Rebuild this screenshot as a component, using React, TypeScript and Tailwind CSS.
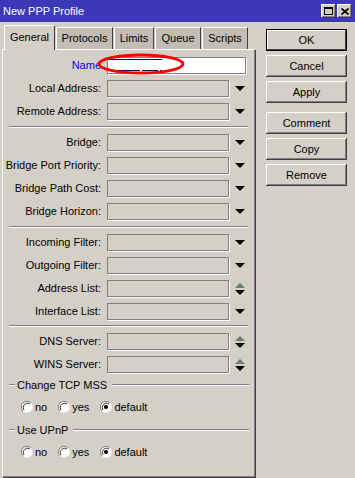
import React from "react";

const raised =
  "shadow-[inset_-1px_-1px_#404040,inset_1px_1px_#ffffff,inset_-2px_-2px_#808080]";

function DownArrow() {
  return (
    <svg width="10" height="6" viewBox="0 0 10 6">
      <polygon points="0,0 10,0 5,5" fill="#000" />
    </svg>
  );
}

function UpDownArrow() {
  return (
    <svg width="10" height="12" viewBox="0 0 10 12">
      <polygon points="5,0 10,5 0,5" fill="#6f7d6f" />
      <polygon points="0,7 10,7 5,12" fill="#000" />
    </svg>
  );
}

function Field({ label, mt, updown }: { label: string; mt: string; updown?: boolean }) {
  return (
    <div className={`flex items-center h-[17px] ${mt}`}>
      <div className="w-[99px] pr-[1px] text-right whitespace-nowrap">{label}</div>
      <div className="ml-[5px] w-[122px] h-[17px] border border-[#808080] shadow-[1px_1px_0_#ffffff]" />
      <div className="w-[22px] flex justify-center">{updown ? <UpDownArrow /> : <DownArrow />}</div>
    </div>
  );
}

function Separator({ mt }: { mt: string }) {
  return <div className={`ml-[6px] mr-[6px] h-[2px] border-t border-[#808080] border-b border-b-white ${mt}`} />;
}

function GroupHeader({ title, mt }: { title: string; mt: string }) {
  return (
    <div className={`flex items-center h-[14px] ${mt}`}>
      <div className="ml-[6px] w-[6px] h-[2px] border-t border-[#808080] border-b border-b-white" />
      <div className="ml-[2px] whitespace-nowrap">{title}</div>
      <div className="ml-[5px] mr-[5px] flex-1 h-[2px] border-t border-[#808080] border-b border-b-white" />
    </div>
  );
}

function Radio({ checked }: { checked?: boolean }) {
  return (
    <svg width="12" height="12" viewBox="0 0 12 12">
      <circle cx="6" cy="6" r="5.5" fill="#ffffff" />
      <path d="M10 2 A5.5 5.5 0 0 0 2 10" stroke="#808080" strokeWidth="1" fill="none" />
      <path d="M9 3 A4.3 4.3 0 0 0 3 9" stroke="#404040" strokeWidth="1" fill="none" />
      <path d="M2 10 A5.5 5.5 0 0 0 10 2" stroke="#e8e6e0" strokeWidth="1" fill="none" />
      {checked && <circle cx="6" cy="6" r="2" fill="#000" />}
    </svg>
  );
}

function RadioRow({ mt }: { mt: string }) {
  return (
    <div className={`flex items-center h-[14px] pl-[18px] ${mt}`}>
      <Radio />
      <span className="ml-[2px]">no</span>
      <span className="ml-[11px] flex"><Radio /></span>
      <span className="ml-[2px]">yes</span>
      <span className="ml-[11px] flex"><Radio checked /></span>
      <span className="ml-[2px]">default</span>
    </div>
  );
}

function Btn({ label, mt, def }: { label: string; mt: string; def?: boolean }) {
  return (
    <div
      className={`h-[22px] flex items-center justify-center bg-[#d4d0c8] ${mt} ${
        def ? "border border-black shadow-[inset_-1px_-1px_#404040,inset_1px_1px_#ffffff]" : raised
      }`}
    >
      {label}
    </div>
  );
}

const tabs = ["Protocols", "Limits", "Queue", "Scripts"];
const tabWidths = ["w-[57px]", "w-[40px]", "w-[46px]", "w-[46px]"];

export default function App() {
  return (
    <div className="relative w-[355px] h-[478px] bg-[#d4d0c8] text-[11px] text-black font-['Liberation_Sans',Arial,sans-serif] overflow-hidden">
      {/* title bar */}
      <div className="h-[22px] bg-[#3b39b9] flex items-center pl-[3px]">
        <span className="text-white text-[11px]">New PPP Profile</span>
        <div className="ml-auto flex gap-[1px] mr-[3px]">
          <div className={`w-[15px] h-[14px] bg-[#d4d0c8] flex items-center justify-center ${raised}`}>
            <svg width="9" height="8" viewBox="0 0 9 8">
              <rect x="0.5" y="0.5" width="8" height="7" fill="none" stroke="#000" />
              <rect x="0" y="0" width="9" height="2" fill="#000" />
            </svg>
          </div>
          <div className={`w-[15px] h-[14px] bg-[#d4d0c8] flex items-center justify-center ${raised}`}>
            <svg width="8" height="7" viewBox="0 0 8 7">
              <path d="M0.5 0.5 L7.5 6.5 M7.5 0.5 L0.5 6.5" stroke="#000" strokeWidth="1.8" />
            </svg>
          </div>
        </div>
      </div>

      <div className="flex">
        {/* left: tabs + panel */}
        <div className="ml-[2px] w-[253px] pt-[3px]">
          <div className="flex items-start pl-[2px] h-[24px] relative z-10">
            <div className="w-[51px] h-[25px] bg-[#d4d0c8] border-t border-l border-white border-r border-r-[#404040] flex items-center justify-center pb-[2px]">
              General
            </div>
            {tabs.map((t, i) => (
              <div
                key={t}
                className={`${tabWidths[i]} mt-[2px] ml-[1px] h-[22px] bg-[#c2beb6] border-t border-l border-white border-r border-r-[#404040] flex items-center justify-center`}
              >
                {t}
              </div>
            ))}
          </div>
          <div className="h-[428px] border-t border-l border-white border-r border-r-[#808080] border-b border-b-[#808080] shadow-[1px_1px_0_#404040]">
            <div className="flex items-center h-[17px] mt-[7px]">
              <div className="w-[99px] pr-[1px] text-right text-[#0000ff]">Name</div>
              <div className="ml-[5px] w-[139px] h-[17px] bg-white border border-[#808080] shadow-[1px_1px_0_#ffffff]" />
            </div>
            <Field label="Local Address:" mt="mt-[6px]" />
            <Field label="Remote Address:" mt="mt-[6px]" />
            <Separator mt="mt-[6px]" />
            <Field label="Bridge:" mt="mt-[6px]" />
            <Field label="Bridge Port Priority:" mt="mt-[6px]" />
            <Field label="Bridge Path Cost:" mt="mt-[6px]" />
            <Field label="Bridge Horizon:" mt="mt-[6px]" />
            <Separator mt="mt-[6px]" />
            <Field label="Incoming Filter:" mt="mt-[6px]" />
            <Field label="Outgoing Filter:" mt="mt-[6px]" />
            <Field label="Address List:" mt="mt-[6px]" updown />
            <Field label="Interface List:" mt="mt-[6px]" />
            <Separator mt="mt-[5px]" />
            <Field label="DNS Server:" mt="mt-[6px]" updown />
            <Field label="WINS Server:" mt="mt-[6px]" updown />
            <GroupHeader title="Change TCP MSS" mt="mt-[5px]" />
            <RadioRow mt="mt-[8px]" />
            <GroupHeader title="Use UPnP" mt="mt-[9px]" />
            <RadioRow mt="mt-[8px]" />
          </div>
        </div>

        {/* right: buttons */}
        <div className="ml-[11px] w-[81px] pt-[7px] flex flex-col">
          <Btn label="OK" mt="mt-0" def />
          <Btn label="Cancel" mt="mt-[4px]" />
          <Btn label="Apply" mt="mt-[4px]" />
          <Btn label="Comment" mt="mt-[9px]" />
          <Btn label="Copy" mt="mt-[4px]" />
          <Btn label="Remove" mt="mt-[4px]" />
        </div>
      </div>

      {/* red annotation around the name field */}
      <svg className="absolute left-[97px] top-[53px]" width="88" height="23" viewBox="0 0 88 23">
        <line x1="11" y1="6.5" x2="65" y2="6.5" stroke="#0a1050" strokeWidth="1" />
        <line x1="11" y1="17.5" x2="43" y2="17.5" stroke="#0a1050" strokeWidth="1" />
        <line x1="45" y1="17.5" x2="61" y2="17.5" stroke="#0a1050" strokeWidth="1" />
        <line x1="63" y1="17.5" x2="65" y2="17.5" stroke="#0a1050" strokeWidth="1" />
        <ellipse cx="44" cy="11" rx="42" ry="9" fill="none" stroke="#ff0000" strokeWidth="3" />
      </svg>
    </div>
  );
}
